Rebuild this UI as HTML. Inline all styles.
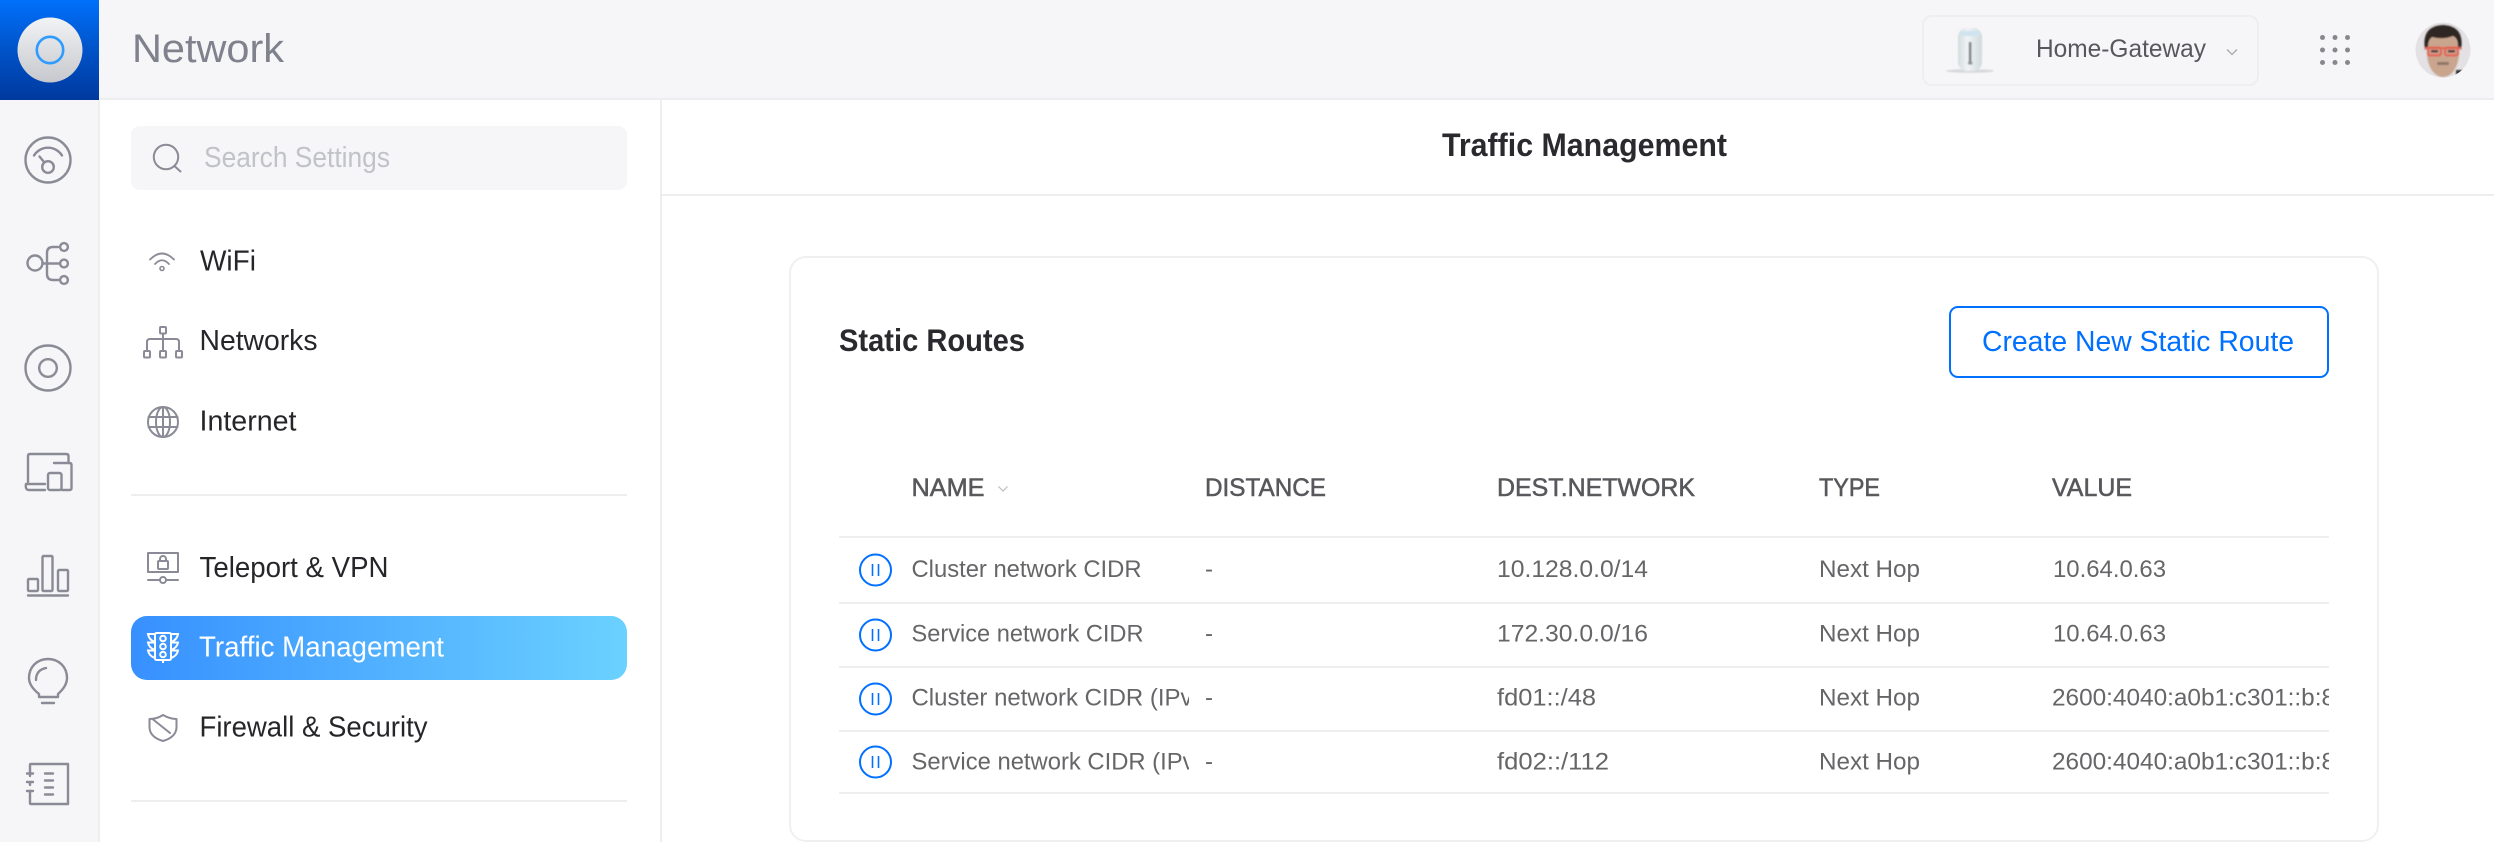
<!DOCTYPE html>
<html lang="en">
<head>
<meta charset="utf-8">
<title>Network - Traffic Management</title>
<style>
html,body{margin:0;padding:0;width:2494px;height:842px;overflow:hidden;background:#fff}
svg{display:block}
text{font-family:"Liberation Sans",sans-serif;white-space:pre}
.ic{fill:none;stroke:#8a8b96;stroke-width:2;stroke-linecap:round;stroke-linejoin:round}
.ic2{fill:none;stroke:#8a8b96;stroke-width:2.4;stroke-linecap:round;stroke-linejoin:round}
.m{font-size:29px;fill:#26262a}
.h{font-size:25px;fill:#58585c;stroke:#58585c;stroke-width:.55}
.r{font-size:24px;fill:#666669}
.pb{fill:none;stroke:#0070ff;stroke-width:2}
.pb path{stroke-width:1.6}
.ln{fill:#eeeeef}
</style>
</head>
<body>
<svg xmlns="http://www.w3.org/2000/svg" width="2494" height="842" viewBox="0 0 2494 842">
<defs>
<linearGradient id="blue" x1="0" y1="0" x2="0" y2="1"><stop offset="0" stop-color="#0070fb"/><stop offset=".5" stop-color="#0053c8"/><stop offset="1" stop-color="#00399f"/></linearGradient>
<linearGradient id="disc" x1="0" y1="0" x2="0" y2="1"><stop offset="0" stop-color="#f2f3f5"/><stop offset="1" stop-color="#c6c8cd"/></linearGradient>
<linearGradient id="act" x1="0" y1="0" x2="1" y2="0"><stop offset="0" stop-color="#3790ff"/><stop offset="1" stop-color="#6bd1ff"/></linearGradient>
<linearGradient id="dev" x1="0" y1="0" x2="1" y2="0"><stop offset="0" stop-color="#d3dcde"/><stop offset=".4" stop-color="#f0f4f5"/><stop offset="1" stop-color="#d0d9dc"/></linearGradient>
<filter id="soft" x="-20%" y="-20%" width="140%" height="140%"><feGaussianBlur stdDeviation="0.7"/></filter>
<clipPath id="cn"><rect x="900" y="540" width="289" height="250"/></clipPath>
<clipPath id="cv"><rect x="2040" y="540" width="289" height="250"/></clipPath>
<clipPath id="av"><circle cx="2443" cy="50" r="27.500"/></clipPath>
</defs>

<!-- backgrounds -->
<rect x="0" y="0" width="2494" height="99" fill="#f6f6f8"/>
<rect x="0" y="98" width="2494" height="2" fill="#ecedef"/>
<rect x="0" y="100" width="99" height="742" fill="#f6f6f8"/>
<rect x="98" y="100" width="2" height="742" fill="#eeeef1"/>
<rect x="660" y="100" width="2" height="742" fill="#eeeef0"/>
<rect x="662" y="194" width="1832" height="2" fill="#eeeeef"/>

<!-- logo -->
<rect x="0" y="0" width="99" height="100" fill="url(#blue)"/>
<circle cx="50" cy="50" r="32.500" fill="url(#disc)"/>
<circle cx="50" cy="50" r="13.200" fill="none" stroke="#2f9bff" stroke-width="2.600"/>

<!-- top bar -->
<text x="132" y="62" font-size="40" fill="#7f818d" textLength="152" lengthAdjust="spacingAndGlyphs">Network</text>
<rect x="1923" y="16" width="335" height="69" rx="9" fill="#f6f6f8" stroke="#eeeef0" stroke-width="2"/>
<g filter="url(#soft)">
<ellipse cx="1970" cy="71" rx="24" ry="1.800" fill="#d5d7d9"/>
<rect x="1958" y="28" width="24" height="43" rx="9" fill="url(#dev)"/>
<rect x="1960" y="31" width="20" height="5" rx="2" fill="#cfe4ef"/>
<rect x="1968.800" y="42" width="2.600" height="20" fill="#7c8386"/>
<rect x="1968" y="62" width="4.400" height="2.500" fill="#8a9195"/>
</g>
<text x="2036" y="57" font-size="25" fill="#58585c" textLength="170" lengthAdjust="spacingAndGlyphs">Home-Gateway</text>
<path d="M2227 49.500l5 5 5-5" fill="none" stroke="#a9a9ad" stroke-width="1.300"/>
<g fill="#88888c">
<circle cx="2322.500" cy="37.500" r="2.500"/><circle cx="2335" cy="37.500" r="2.500"/><circle cx="2347.500" cy="37.500" r="2.500"/>
<circle cx="2322.500" cy="50" r="2.500"/><circle cx="2335" cy="50" r="2.500"/><circle cx="2347.500" cy="50" r="2.500"/>
<circle cx="2322.500" cy="62.500" r="2.500"/><circle cx="2335" cy="62.500" r="2.500"/><circle cx="2347.500" cy="62.500" r="2.500"/>
</g>
<!-- avatar -->
<g clip-path="url(#av)">
<rect x="2414" y="21" width="58" height="58" fill="#e3e1e4"/>
<g filter="url(#soft)">
<rect x="2456" y="70" width="8" height="8" fill="#30302f"/>
<ellipse cx="2443" cy="53" rx="16" ry="24" fill="#c9a58e"/>
<path d="M2425 50Q2421 26 2443 25Q2465 26 2461 50L2458 47Q2458 38 2453 36Q2443 40 2432 37Q2428 40 2428 47Z" fill="#2f2622"/>
<rect x="2428" y="47.500" width="13" height="8" rx="2" fill="#d69a88" stroke="#e2604f" stroke-width="2"/>
<rect x="2445" y="47.500" width="13" height="8" rx="2" fill="#d69a88" stroke="#e2604f" stroke-width="2"/>
<rect x="2425" y="47" width="36" height="2" fill="#e2604f"/>
<rect x="2431" y="50" width="7" height="2.500" fill="#4a3a36"/>
<rect x="2448" y="50" width="7" height="2.500" fill="#4a3a36"/>
<rect x="2437" y="62" width="12" height="3" rx="1.500" fill="#8f7468"/>
</g>
</g>

<!-- side rail icons -->
<g class="ic2">
<circle cx="48" cy="160" r="22.500"/>
<path d="M34 155.500A16.500 16.500 0 0 1 62 155.500"/>
<path d="M39.500 156.500L44 162"/>
<circle cx="48" cy="167" r="5.800"/>

<circle cx="35" cy="263" r="7.500"/>
<circle cx="64" cy="247" r="3.900"/>
<circle cx="64" cy="263.500" r="3.900"/>
<circle cx="64" cy="280" r="3.900"/>
<path d="M42.500 263.500H59"/>
<path d="M58 247H53Q47 247 47 253V274Q47 280 53 280H58.500"/>

<circle cx="48" cy="368" r="22.500"/>
<circle cx="48" cy="368" r="8.800"/>

<path d="M28 482V456Q28 454 30 454H66Q68.500 454 68.500 456V463"/>
<path d="M54 463H69.500Q71.500 463 71.500 465V488Q71.500 490 69.500 490H62"/>
<rect x="48" y="473" width="13.500" height="17" rx="2"/>
<path d="M26 484H45M26 484Q25 490 29 490H45"/>

<rect x="28" y="579" width="10" height="12" rx="1"/>
<rect x="42.500" y="556" width="10" height="35" rx="1"/>
<rect x="58" y="570" width="10" height="21" rx="1"/>
<path d="M28 595.500H68"/>

<path d="M39 697V694Q29 686 29 678C29 667 37 659 48 659S67 667 67 678Q67 686 58 694V697Z"/>
<path d="M36 680Q36 670 46 668"/>
<path d="M42 703H54"/>

<path d="M30 770V765Q30 764 31 764H68V804H31Q30 804 30 803V797"/>
<path d="M30 770V776M30 783V785M30 791V797"/>
<path d="M27 773.500H33M27 782H33M27 791H33"/>
<path d="M45 773.500H53M45 780.500H53M45 787.500H53M45 794.500H53"/>
</g>

<!-- search -->
<rect x="131" y="126" width="496" height="64" rx="9" fill="#f6f6f8"/>
<g class="ic">
<circle cx="166" cy="157" r="12.200"/>
<path d="M175 166.500L180.500 171.500"/>
</g>
<text x="204" y="167" font-size="28.500" fill="#c1c3c9" textLength="186" lengthAdjust="spacingAndGlyphs">Search Settings</text>

<!-- menu -->
<g class="ic">
<path d="M150 259.500Q162 247.500 174 259.500" stroke-width="1.800"/>
<path d="M155 264Q162 256.500 169 264" stroke-width="1.800"/>
<circle cx="162" cy="268.500" r="2" stroke-width="1.600"/>
</g>
<text x="200" y="270.500" class="m" textLength="56" lengthAdjust="spacingAndGlyphs">WiFi</text>

<g class="ic">
<rect x="160" y="327" width="6" height="6.500" rx="1"/>
<path d="M163 333.500V351M147 351V342Q147 339 150 339H176Q179 339 179 342V351"/>
<rect x="144" y="351" width="6" height="6.500" rx="1"/>
<rect x="160" y="351" width="6" height="6.500" rx="1"/>
<rect x="176" y="351" width="6" height="6.500" rx="1"/>
</g>
<text x="199.500" y="350" class="m" textLength="118" lengthAdjust="spacingAndGlyphs">Networks</text>

<g class="ic">
<circle cx="163" cy="422" r="15"/>
<ellipse cx="163" cy="422" rx="7" ry="15"/>
<path d="M163 407V437M148.500 417H177.500M148.500 427H177.500"/>
</g>
<text x="199.500" y="430.500" class="m" textLength="97" lengthAdjust="spacingAndGlyphs">Internet</text>

<rect x="131" y="494" width="496" height="2" class="ln"/>

<g class="ic">
<path d="M148 572V553H178V572H148"/>
<rect x="158" y="561" width="10" height="8" rx="1"/>
<path d="M160 561V559A3 3 0 0 1 166 559V561"/>
<path d="M148 580H160M166 580H178"/>
<circle cx="163" cy="580" r="3"/>
</g>
<text x="199.500" y="577" class="m" textLength="189" lengthAdjust="spacingAndGlyphs">Teleport &amp; VPN</text>

<rect x="131" y="616" width="496" height="64" rx="16" fill="url(#act)"/>
<g fill="none" stroke="#fff" stroke-width="2">
<rect x="155" y="633" width="16" height="27" rx="1.500"/>
<circle cx="163" cy="638.500" r="2.800"/>
<circle cx="163" cy="646.500" r="2.800"/>
<circle cx="163" cy="654.500" r="2.800"/>
<path d="M163 660V663"/>
<path d="M155 634H148Q149 640 155 642M155 642.500H148Q149 648 155 650M155 650.500H148Q149 656 155 658"/>
<path d="M171 634H178Q177 640 171 642M171 642.500H178Q177 648 171 650M171 650.500H178Q177 656 171 658"/>
</g>
<text x="199" y="656.500" class="m" style="fill:#fff" textLength="245" lengthAdjust="spacingAndGlyphs">Traffic Management</text>

<g class="ic">
<path d="M149.500 719Q157 719 163 715Q170 719 176.500 719V727Q176.500 737 163 741Q149.500 737 149.500 727Z"/>
<path d="M152.500 719L170 733"/>
</g>
<text x="199.500" y="736.500" class="m" textLength="228" lengthAdjust="spacingAndGlyphs">Firewall &amp; Security</text>

<rect x="131" y="800" width="496" height="2" class="ln"/>

<!-- page title -->
<text x="1442" y="156" font-size="32.500" font-weight="700" fill="#2a2a2e" textLength="285" lengthAdjust="spacingAndGlyphs">Traffic Management</text>

<!-- card -->
<rect x="790" y="257" width="1588" height="584" rx="16" fill="#fff" stroke="#f0f0f1" stroke-width="2"/>
<text x="839" y="351" font-size="31.500" font-weight="700" fill="#2a2a2e" textLength="186" lengthAdjust="spacingAndGlyphs">Static Routes</text>

<rect x="1950" y="307" width="378" height="70" rx="8" fill="#fff" stroke="#0070ff" stroke-width="2"/>
<text x="1982" y="351" font-size="29" fill="#0070ff" textLength="312" lengthAdjust="spacingAndGlyphs">Create New Static Route</text>

<!-- table head -->
<text x="911.500" y="496" class="h" textLength="73" lengthAdjust="spacingAndGlyphs">NAME</text>
<path d="M998.500 486.500l4.500 4.500 4.500-4.500" fill="none" stroke="#bcbcc0" stroke-width="1.200"/>
<text x="1205" y="496" class="h" textLength="121" lengthAdjust="spacingAndGlyphs">DISTANCE</text>
<text x="1497" y="496" class="h" textLength="198" lengthAdjust="spacingAndGlyphs">DEST.NETWORK</text>
<text x="1819" y="496" class="h" textLength="61" lengthAdjust="spacingAndGlyphs">TYPE</text>
<text x="2052" y="496" class="h" textLength="80" lengthAdjust="spacingAndGlyphs">VALUE</text>

<!-- table lines -->
<rect x="839" y="536" width="1490" height="2" class="ln"/>
<rect x="839" y="602" width="1490" height="2" class="ln"/>
<rect x="839" y="666" width="1490" height="2" class="ln"/>
<rect x="839" y="730" width="1490" height="2" class="ln"/>
<rect x="839" y="792" width="1490" height="2" class="ln"/>

<!-- pause icons -->
<g class="pb">
<circle cx="875.500" cy="570" r="15.500"/><path d="M872.500 564V576M878.500 564V576"/>
<circle cx="875.500" cy="635" r="15.500"/><path d="M872.500 629V641M878.500 629V641"/>
<circle cx="875.500" cy="699" r="15.500"/><path d="M872.500 693V705M878.500 693V705"/>
<circle cx="875.500" cy="762" r="15.500"/><path d="M872.500 756V768M878.500 756V768"/>
</g>

<!-- rows -->
<text x="911.500" y="577" class="r" textLength="230" lengthAdjust="spacingAndGlyphs">Cluster network CIDR</text>
<text x="1205" y="577" class="r">-</text>
<text x="1497" y="577" class="r" textLength="151" lengthAdjust="spacingAndGlyphs">10.128.0.0/14</text>
<text x="1819" y="577" class="r" textLength="101" lengthAdjust="spacingAndGlyphs">Next Hop</text>
<text x="2053" y="577" class="r" textLength="113" lengthAdjust="spacingAndGlyphs">10.64.0.63</text>

<text x="911.500" y="641.500" class="r" textLength="232" lengthAdjust="spacingAndGlyphs">Service network CIDR</text>
<text x="1205" y="641.500" class="r">-</text>
<text x="1497" y="641.500" class="r" textLength="151" lengthAdjust="spacingAndGlyphs">172.30.0.0/16</text>
<text x="1819" y="641.500" class="r" textLength="101" lengthAdjust="spacingAndGlyphs">Next Hop</text>
<text x="2053" y="641.500" class="r" textLength="113" lengthAdjust="spacingAndGlyphs">10.64.0.63</text>

<g clip-path="url(#cn)">
<text x="911.500" y="705.500" class="r" textLength="281" lengthAdjust="spacingAndGlyphs">Cluster network CIDR (IPv</text>
<text x="911.500" y="769.500" class="r" textLength="283" lengthAdjust="spacingAndGlyphs">Service network CIDR (IPv</text>
</g>
<text x="1205" y="705.500" class="r">-</text>
<text x="1497" y="705.500" class="r" textLength="99" lengthAdjust="spacingAndGlyphs">fd01::/48</text>
<text x="1819" y="705.500" class="r" textLength="101" lengthAdjust="spacingAndGlyphs">Next Hop</text>

<text x="1205" y="769.500" class="r">-</text>
<text x="1497" y="769.500" class="r" textLength="112" lengthAdjust="spacingAndGlyphs">fd02::/112</text>
<text x="1819" y="769.500" class="r" textLength="101" lengthAdjust="spacingAndGlyphs">Next Hop</text>

<g clip-path="url(#cv)">
<text x="2052" y="705.500" class="r" textLength="283" lengthAdjust="spacingAndGlyphs">2600:4040:a0b1:c301::b:8</text>
<text x="2052" y="769.500" class="r" textLength="283" lengthAdjust="spacingAndGlyphs">2600:4040:a0b1:c301::b:8</text>
</g>
</svg>
</body>
</html>
